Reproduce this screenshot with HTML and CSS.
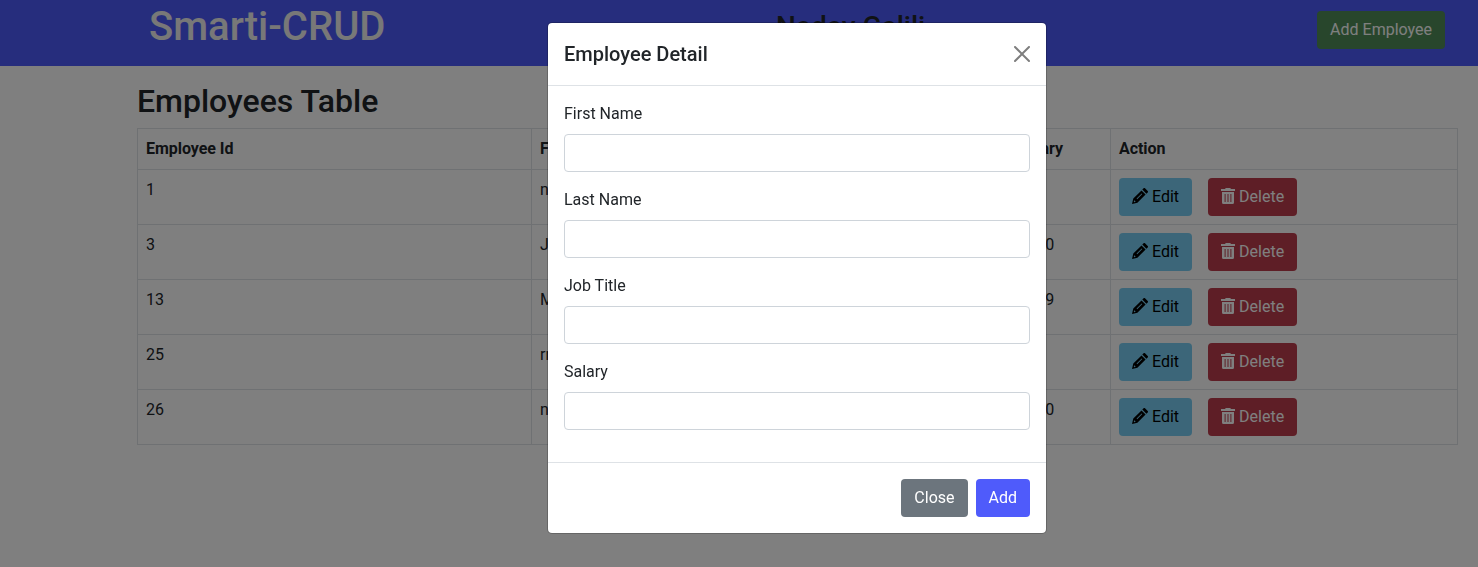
FILE: index.html
```
<!DOCTYPE html>
<html lang="en">
<head>
<meta charset="utf-8">
<title>Smarti-CRUD</title>
<link rel="stylesheet" href="styles.css">
</head>
<body>
<header class="topbar">
  <h1 class="brand">Smarti-CRUD</h1>
  <h3 class="author">Nadav Galili</h3>
  <button class="btn btn-success">Add Employee</button>
</header>
<main class="content">
  <h2 class="heading">Employees Table</h2>
  <table class="table">
    <colgroup><col class="c-id"><col class="c-first"><col class="c-last"><col class="c-job"><col class="c-salary"><col class="c-action"></colgroup>
    <thead><tr><th>Employee Id</th><th>First</th><th>Last</th><th>Job</th><th class="th-salary">Salary</th><th>Action</th></tr></thead>
    <tbody id="rows"></tbody>
  </table>
</main>
<div class="backdrop"></div>
<section class="modal">
  <div class="modal-header">
    <h5 class="modal-title">Employee Detail</h5>
    <svg class="close" viewBox="0 0 16 16"><path d="M.293.293a1 1 0 011.414 0L8 6.586 14.293.293a1 1 0 111.414 1.414L9.414 8l6.293 6.293a1 1 0 01-1.414 1.414L8 9.414l-6.293 6.293a1 1 0 01-1.414-1.414L6.586 8 .293 1.707a1 1 0 010-1.414z"/></svg>
  </div>
  <form class="modal-body">
    <label class="field">First Name<input class="input" type="text"></label>
    <label class="field">Last Name<input class="input" type="text"></label>
    <label class="field">Job Title<input class="input" type="text"></label>
    <label class="field">Salary<input class="input" type="text"></label>
  </form>
  <div class="modal-footer">
    <button class="btn btn-secondary">Close</button>
    <button class="btn btn-primary">Add</button>
  </div>
</section>
<script src="app.js"></script>
</body>
</html>
```
FILE: app.js
```
const employees = [
  [1, "n", "", "", "900"],
  [3, "J", "", "", "4,500"],
  [13, "M", "", "", "9,999"],
  [25, "rr", "", "", "50"],
  [26, "n", "", "", "5,000"]
];
const pencil = '<svg class="icon" viewBox="0 0 16 16"><path d="M13 .3a1 1 0 0 0-1.400 0L10.300 1.600l4.100 4.100 1.300-1.300a1 1 0 0 0 0-1.400zM13.600 6.500 9.500 2.400 1.300 10.600 0 16l5.400-1.300zM4.600 10.600 9.700 5.500l.6.600-5.100 5.100zM2.200 12.300l1.500 1.500-1.300.4-.6-.6z" fill-rule="evenodd"/></svg>';
const trash = '<svg class="icon icon-trash" viewBox="0 0 14 16"><path d="M4.800 0h4.400l.8 1H14v2H0V1h4zM1 4h12v10.500a1.500 1.500 0 0 1-1.500 1.500h-9A1.500 1.500 0 0 1 1 14.500zM3.600 6v8h1V6zM6.500 6v8h1V6zM9.400 6v8h1V6z" fill-rule="evenodd"/></svg>';
document.getElementById("rows").innerHTML = employees.map(row =>
  `<tr>${row.map(v => `<td>${v}</td>`).join("")}<td><div class="actions"><button class="btn btn-info">${pencil} Edit</button><button class="btn btn-danger">${trash} Delete</button></div></td></tr>`
).join("");
```
FILE: styles.css
```
* { box-sizing: border-box; }
body { margin: 0; font: 16px/1.5 Roboto, sans-serif; color: #212529; background: #fff; overflow: hidden; }
h1, h2, h3, h5 { margin: 0; font-weight: 500; line-height: 1.2; }
.topbar { display: grid; grid-template-columns: 627px 1fr auto; align-items: start; height: 66px; padding: 3px 33px 0 149px; background: #4c5afa; }
.brand { font-size: 40px; color: #f0f0f0; }
.author { font-size: 28px; padding-top: 7px; }
.topbar .btn { margin-top: 8px; }
.content { padding: 16px 20px 0 137px; }
.heading { font-size: 32px; margin-bottom: 8px; }
.table { width: 1321px; table-layout: fixed; border-collapse: collapse; }
.c-id { width: 394px; }
.c-first { width: 180px; }
.c-last { width: 160px; }
.c-job { width: 135px; }
.c-salary { width: 104px; }
th, td { padding: 8px; border: 1px solid #dee2e6; text-align: left; vertical-align: top; }
th { font-weight: 700; letter-spacing: -.05px; }
.th-salary { padding-left: 11px; }
.actions { display: flex; gap: 16px; }
.btn { font: 400 16px/24px Roboto, sans-serif; padding: 6px 12px; border: 1px solid transparent; border-radius: 4px; color: #fff; white-space: nowrap; }
.btn-success { background: #508d58; }
.btn-info { background: #79cdf2; color: #000; }
.btn-danger { background: #bd3d4c; }
.btn-secondary { background: #6c757d; }
.btn-primary { background: #4f5bfb; }
.icon { width: 16px; height: 16px; fill: currentColor; vertical-align: -2px; }
.icon-trash { width: 14px; }
.backdrop { position: fixed; inset: 0; background: rgba(0, 0, 0, .5); }
.modal { position: fixed; left: 547px; top: 22px; width: 500px; background: #fff; background-clip: padding-box; border: 1px solid rgba(0, 0, 0, .2); border-radius: 5px; }
.modal-header { display: flex; align-items: center; justify-content: space-between; padding: 16px; border-bottom: 1px solid #dee2e6; }
.modal-title { font-size: 20px; line-height: 30px; }
.close { width: 16px; height: 16px; opacity: .5; }
.modal-body { padding: 16px; }
.field { display: block; margin-bottom: 16px; }
.input { display: block; width: 100%; height: 38px; margin-top: 8px; padding: 6px 12px; border: 1px solid #ced4da; border-radius: 4px; background: #fff; }
.modal-footer { display: flex; justify-content: flex-end; gap: 8px; padding: 16px; border-top: 1px solid #dee2e6; }
```
